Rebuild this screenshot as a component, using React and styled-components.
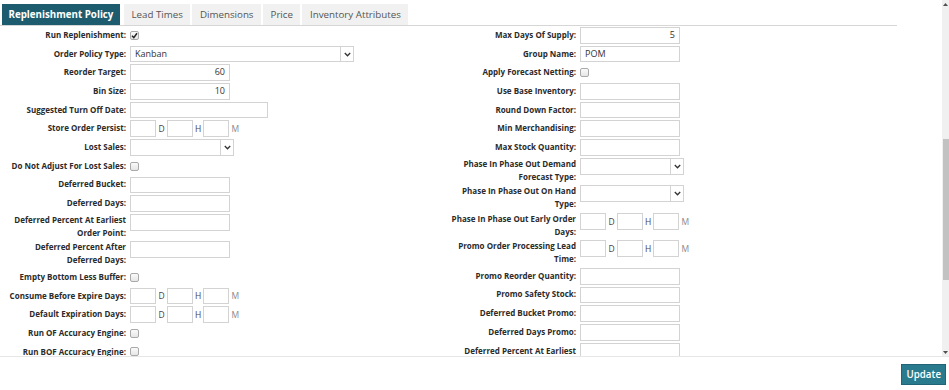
import React from "react";
import styled, { createGlobalStyle } from "styled-components";

const Global = createGlobalStyle`
  html, body { margin: 0; padding: 0; background: #fff; }
  body { font-family: "Open Sans", "Liberation Sans", sans-serif; color: #333; }
  * { box-sizing: border-box; }
`;

const Page = styled.div`
  width: 949px;
  height: 390px;
  display: flex;
  flex-direction: column;
  overflow: hidden;
`;

const Main = styled.div`
  height: 356px;
  display: flex;
  flex-direction: row;
`;

const ScrollArea = styled.div`
  flex: 1;
  overflow: hidden;
`;

const TabBar = styled.div`
  width: 897px;
  display: flex;
  gap: 2px;
  padding: 4px 0 0 2px;
  border-bottom: 1px solid #d6d6d6;
`;

const Tab = styled.div`
  height: 21px;
  line-height: 21px;
  padding: 0 ${(p) => (p.$active ? 6.5 : 7.5)}px;
  margin-right: ${(p) => (p.$active ? 2 : 0)}px;
  font-size: 9.75px;
  font-weight: ${(p) => (p.$active ? 700 : 400)};
  color: ${(p) => (p.$active ? "#ffffff" : "#555")};
  background: ${(p) => (p.$active ? "#1d5c6e" : "#f1f1f1")};
  white-space: nowrap;
`;

const Form = styled.div`
  display: grid;
  grid-template-columns: 450px 450px;
  padding-top: 1px;
  align-items: start;
`;

const Column = styled.div`
  display: flex;
  flex-direction: column;
  gap: 2px;
`;

const Row = styled.div`
  display: grid;
  grid-template-columns: 126px auto;
  column-gap: 4px;
  align-items: start;
  min-height: 16.7px;
`;

const Label = styled.div`
  min-height: 16.7px;
  display: flex;
  align-items: center;
  justify-content: flex-end;
  text-align: right;
  font-size: 8px;
  line-height: 12.75px;
  font-weight: 700;
  color: #2b2b2b;
  white-space: nowrap;
`;

const Field = styled.div`
  height: 16.7px;
  display: flex;
  align-items: center;
`;

const TextBox = styled.div`
  width: ${(p) => p.$w || 100}px;
  height: 16.7px;
  border: 1px solid #d3d3d3;
  background: #fff;
  font-size: 9px;
  line-height: 14.7px;
  padding: 0 4px;
  text-align: ${(p) => p.$align || "left"};
  color: #333;
`;

const SelectBox = styled.div`
  width: ${(p) => p.$w || 104}px;
  height: 16.7px;
  border: 1px solid #d3d3d3;
  background: #fff;
  display: flex;
  font-size: 9px;
  color: #333;
`;

const SelectText = styled.div`
  flex: 1;
  line-height: 14.7px;
  padding: 0 4px;
`;

const SelectArrow = styled.div`
  width: 13px;
  border-left: 1px solid #d3d3d3;
  display: flex;
  align-items: center;
  justify-content: center;
`;

const Check = styled.div`
  width: 9px;
  height: 9px;
  border: 1px solid #a9a9a9;
  border-radius: 2px;
  background: linear-gradient(#fafafa, #e6e6e6);
  display: flex;
  align-items: center;
  justify-content: center;
`;

const TimeGroup = styled.div`
  display: flex;
  align-items: center;
`;

const TimeBox = styled.div`
  width: 26px;
  height: 16.7px;
  border: 1px solid #d3d3d3;
  background: #fff;
`;

const Unit = styled.span`
  width: 10.5px;
  padding-left: 2.5px;
  font-size: 8.5px;
  color: ${(p) => (p.$light ? "#8a8a8a" : "#4a4048")};
`;

const Scrollbar = styled.div`
  width: 7px;
  background: #f0f0f0;
  display: flex;
  flex-direction: column;
  align-items: stretch;
`;

const ArrowCell = styled.div`
  height: 8px;
  display: flex;
  align-items: center;
  justify-content: center;
`;

const Track = styled.div`
  flex: 1;
`;

const Thumb = styled.div`
  margin-top: 131px;
  height: 141px;
  margin-left: 1px;
  background: #c2c2c2;
`;

const Footer = styled.div`
  flex: 1;
  border-top: 1px solid #e6e6e6;
  display: flex;
  justify-content: flex-end;
  align-items: flex-start;
  padding: 7px 3px 0 0;
`;

const Button = styled.button`
  height: 21px;
  padding: 0 4px;
  border: 1px solid #1f6577;
  background: #2a7a8d;
  color: #fff;
  font-family: "Open Sans", "Liberation Sans", sans-serif;
  font-size: 9.75px;
  font-weight: 600;
  line-height: 19px;
  cursor: pointer;
`;

const Chevron = () => (
  <svg width="7" height="5" viewBox="0 0 7 5">
    <path d="M0.8 1 L3.5 3.8 L6.2 1" fill="none" stroke="#333" strokeWidth="1.3" />
  </svg>
);

const Tick = () => (
  <svg width="7" height="7" viewBox="0 0 7 7">
    <path d="M1 3.8 L2.8 5.6 L6 1.2" fill="none" stroke="#222" strokeWidth="1.5" />
  </svg>
);

const TimeInput = () => (
  <TimeGroup>
    <TimeBox />
    <Unit>D</Unit>
    <TimeBox />
    <Unit>H</Unit>
    <TimeBox />
    <Unit $light>M</Unit>
  </TimeGroup>
);

const FieldFor = ({ f }) => {
  if (f.type === "check")
    return (
      <Field>
        <Check>{f.checked && <Tick />}</Check>
      </Field>
    );
  if (f.type === "select")
    return (
      <SelectBox $w={f.w}>
        <SelectText>{f.value}</SelectText>
        <SelectArrow>
          <Chevron />
        </SelectArrow>
      </SelectBox>
    );
  if (f.type === "time") return <TimeInput />;
  return (
    <TextBox $w={f.w} $align={f.align}>
      {f.value}
    </TextBox>
  );
};

const left = [
  { label: ["Run Replenishment:"], type: "check", checked: true },
  { label: ["Order Policy Type:"], type: "select", w: 224, value: "Kanban" },
  { label: ["Reorder Target:"], type: "text", value: "60", align: "right" },
  { label: ["Bin Size:"], type: "text", value: "10", align: "right" },
  { label: ["Suggested Turn Off Date:"], type: "text", w: 138 },
  { label: ["Store Order Persist:"], type: "time" },
  { label: ["Lost Sales:"], type: "select", w: 104 },
  { label: ["Do Not Adjust For Lost Sales:"], type: "check" },
  { label: ["Deferred Bucket:"], type: "text" },
  { label: ["Deferred Days:"], type: "text" },
  { label: ["Deferred Percent At Earliest", "Order Point:"], type: "text" },
  { label: ["Deferred Percent After", "Deferred Days:"], type: "text" },
  { label: ["Empty Bottom Less Buffer:"], type: "check" },
  { label: ["Consume Before Expire Days:"], type: "time" },
  { label: ["Default Expiration Days:"], type: "time" },
  { label: ["Run OF Accuracy Engine:"], type: "check" },
  { label: ["Run BOF Accuracy Engine:"], type: "check" },
];

const right = [
  { label: ["Max Days Of Supply:"], type: "text", value: "5", align: "right" },
  { label: ["Group Name:"], type: "text", value: "POM" },
  { label: ["Apply Forecast Netting:"], type: "check" },
  { label: ["Use Base Inventory:"], type: "text" },
  { label: ["Round Down Factor:"], type: "text" },
  { label: ["Min Merchandising:"], type: "text" },
  { label: ["Max Stock Quantity:"], type: "text" },
  { label: ["Phase In Phase Out Demand", "Forecast Type:"], type: "select", w: 104 },
  { label: ["Phase In Phase Out On Hand", "Type:"], type: "select", w: 104 },
  { label: ["Phase In Phase Out Early Order", "Days:"], type: "time" },
  { label: ["Promo Order Processing Lead", "Time:"], type: "time" },
  { label: ["Promo Reorder Quantity:"], type: "text" },
  { label: ["Promo Safety Stock:"], type: "text" },
  { label: ["Deferred Bucket Promo:"], type: "text" },
  { label: ["Deferred Days Promo:"], type: "text" },
  { label: ["Deferred Percent At Earliest"], type: "text" },
];

const FormColumn = ({ rows }) => (
  <Column>
    {rows.map((f, i) => (
      <Row key={i}>
        <Label>
          <span>
            {f.label.map((l, j) => (
              <React.Fragment key={j}>
                {j > 0 && <br />}
                {l}
              </React.Fragment>
            ))}
          </span>
        </Label>
        <FieldFor f={f} />
      </Row>
    ))}
  </Column>
);

const tabs = ["Replenishment Policy", "Lead Times", "Dimensions", "Price", "Inventory Attributes"];

export default function App() {
  return (
    <Page>
      <Global />
      <Main>
        <ScrollArea>
          <TabBar>
            {tabs.map((t, i) => (
              <Tab key={t} $active={i === 0}>
                {t}
              </Tab>
            ))}
          </TabBar>
          <Form>
            <FormColumn rows={left} />
            <FormColumn rows={right} />
          </Form>
        </ScrollArea>
        <Scrollbar>
          <ArrowCell>
            <svg width="5" height="3" viewBox="0 0 5 3">
              <path d="M0 3 L2.5 0 L5 3 Z" fill="#505050" />
            </svg>
          </ArrowCell>
          <Track>
            <Thumb />
          </Track>
          <ArrowCell>
            <svg width="5" height="3" viewBox="0 0 5 3">
              <path d="M0 0 L2.5 3 L5 0 Z" fill="#505050" />
            </svg>
          </ArrowCell>
        </Scrollbar>
      </Main>
      <Footer>
        <Button>Update</Button>
      </Footer>
    </Page>
  );
}
